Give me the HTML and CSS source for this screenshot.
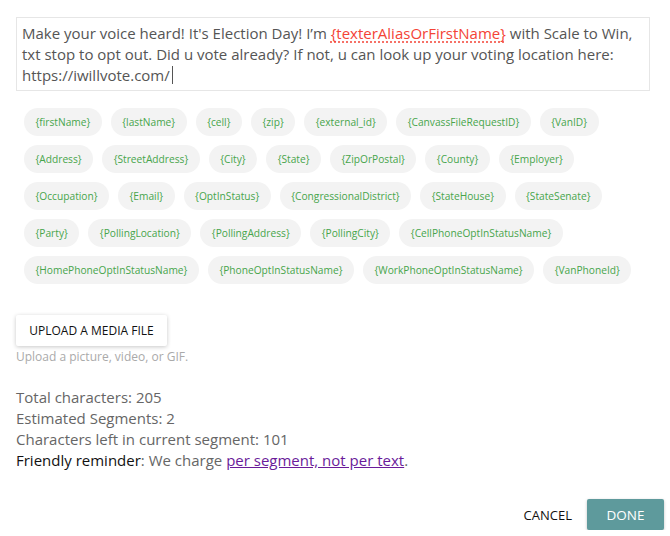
FILE: index.html
```html
<!DOCTYPE html>
<html>
<head>
<meta charset="utf-8">
<link rel="stylesheet" href="styles.css">
</head>
<body>
<div class="page">
  <div class="editor">Make your voice heard! It's Election Day! I’m <span class="alias">{texterAliasOrFirstName}</span> with Scale to Win, txt stop to opt out. Did u vote already? If not, u can look up your voting location here: https://iwillvote.com/ <span class="caret"></span></div>
  <div class="chips">
    <span class="chip">{firstName}</span>
    <span class="chip">{lastName}</span>
    <span class="chip">{cell}</span>
    <span class="chip">{zip}</span>
    <span class="chip">{external_id}</span>
    <span class="chip">{CanvassFileRequestID}</span>
    <span class="chip">{VanID}</span>
    <span class="chip">{Address}</span>
    <span class="chip">{StreetAddress}</span>
    <span class="chip">{City}</span>
    <span class="chip">{State}</span>
    <span class="chip">{ZipOrPostal}</span>
    <span class="chip">{County}</span>
    <span class="chip">{Employer}</span>
    <span class="chip">{Occupation}</span>
    <span class="chip">{Email}</span>
    <span class="chip">{OptInStatus}</span>
    <span class="chip">{CongressionalDistrict}</span>
    <span class="chip">{StateHouse}</span>
    <span class="chip">{StateSenate}</span>
    <span class="chip">{Party}</span>
    <span class="chip">{PollingLocation}</span>
    <span class="chip">{PollingAddress}</span>
    <span class="chip">{PollingCity}</span>
    <span class="chip">{CellPhoneOptInStatusName}</span>
    <span class="chip">{HomePhoneOptInStatusName}</span>
    <span class="chip">{PhoneOptInStatusName}</span>
    <span class="chip">{WorkPhoneOptInStatusName}</span>
    <span class="chip">{VanPhoneId}</span>
  </div>
  <button class="upload">UPLOAD A MEDIA FILE</button>
  <div class="hint">Upload a picture, video, or GIF.</div>
  <div class="stats">
    <div>Total characters: 205</div>
    <div>Estimated Segments: 2</div>
    <div>Characters left in current segment: 101</div>
    <div><span class="strong">Friendly reminder</span>: We charge <a class="link" href="#">per segment, not per text</a>.</div>
  </div>
  <div class="actions">
    <button class="cancel">CANCEL</button>
    <button class="done">DONE</button>
  </div>
</div>
</body>
</html>
```

FILE: styles.css
```css
* { box-sizing: border-box; }
html, body { margin: 0; padding: 0; background: #fff; }
body { font-family: "Open Sans", "Liberation Sans", sans-serif; }
.page { padding: 17px 20px 0 16px; width: 670px; }
.editor {
  border: 1px solid #e6e6e6;
  padding: 5px 5px 4px 5px;
  font-size: 15px;
  line-height: 21px;
  color: #555;
  height: 74px;
}
.alias {
  color: #f44336;
  text-decoration: underline dotted #f44336;
  text-underline-offset: 3px;
}
.caret {
  display: inline-block;
  width: 1px;
  height: 18px;
  background: #555;
  vertical-align: -3px;
  margin-left: -2px;
}
.chips {
  display: flex;
  flex-wrap: wrap;
  gap: 9px 9px;
  margin-top: 17px;
  padding-left: 8px;
  padding-right: 0;
  margin-right: -4px;
}
.chip {
  height: 28px;
  line-height: 28px;
  padding: 0 11.5px;
  border-radius: 14px;
  background: #f3f3f3;
  color: #47a54b;
  font-size: 10.2px;
}
.upload {
  display: block;
  margin-top: 31px;
  height: 31px;
  width: 151px;
  padding: 0;
  border: none;
  background: #fff;
  box-shadow: 0 1px 4px rgba(0,0,0,0.22);
  font-family: inherit;
  font-size: 12px;
  color: #111;
  border-radius: 2px;
}
.hint {
  margin-top: 3px;
  font-size: 12px;
  color: #aaa;
  line-height: 16px;
}
.stats {
  margin-top: 22px;
  font-size: 15px;
  line-height: 21px;
  color: #666;
}
.strong { color: #111; }
.link { color: #6a1b9a; text-decoration: underline; }
.actions {
  display: flex;
  justify-content: flex-end;
  align-items: center;
  gap: 15px;
  margin-top: 28px;
  margin-right: -14px;
}
.cancel {
  border: none;
  background: none;
  font-family: inherit;
  font-size: 13px;
  color: #111;
  padding: 0;
}
.done {
  width: 77px;
  height: 31px;
  border: none;
  background: #5e9a9c;
  color: #fff;
  font-family: inherit;
  font-size: 13.5px;
  border-radius: 2px;
  box-shadow: 0 1px 3px rgba(0,0,0,0.25);
}
```
